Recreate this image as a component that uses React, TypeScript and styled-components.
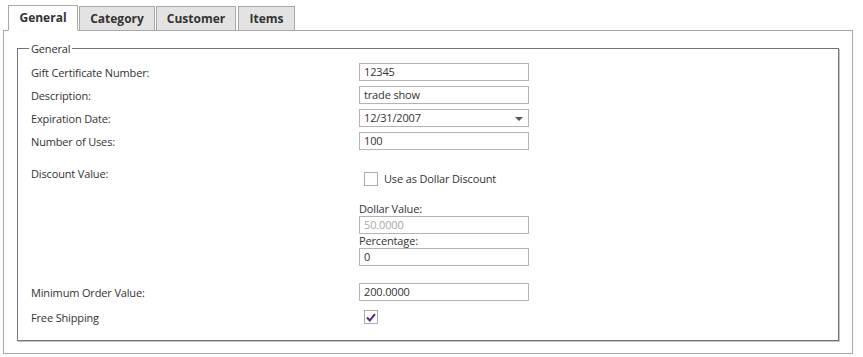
import React from "react";
import styled, { createGlobalStyle } from "styled-components";

const Global = createGlobalStyle`
  html, body { margin: 0; padding: 0; background: #fff; }
  body { padding: 5px 0 0 3px; font-family: "Open Sans", "DejaVu Sans", sans-serif; font-size: 11px; color: #333; letter-spacing: -0.15px; }
  * { box-sizing: border-box; }
`;

const Wrap = styled.div`
  width: 850px;
`;

const TabBar = styled.div`
  display: flex;
  align-items: flex-end;
  padding-left: 5px;
  height: 25px;
  gap: 1px;
`;

const Tab = styled.div<{ $w: number; $active?: boolean; $gap?: number }>`
  width: ${(p) => p.$w}px;
  margin-left: ${(p) => p.$gap ?? 0}px;
  height: ${(p) => (p.$active ? 26 : 24)}px;
  margin-bottom: ${(p) => (p.$active ? -1 : 0)}px;
  position: relative;
  z-index: ${(p) => (p.$active ? 2 : 1)};
  display: flex;
  align-items: center;
  justify-content: center;
  border: 1px solid #a8a8a8;
  border-bottom: ${(p) => (p.$active ? "1px solid #fff" : "none")};
  background: ${(p) => (p.$active ? "#fff" : "#e3e3e3")};
  font-weight: 700;
  font-size: 12px;
  letter-spacing: 0;
  color: #333;
  padding-bottom: ${(p) => (p.$active ? 2 : 0)}px;
`;

const Panel = styled.div`
  border: 1px solid #a8a8a8;
  height: 324px;
  padding: 10px 13px 11px 13px;
`;

const Fieldset = styled.fieldset`
  margin: 0;
  height: 300px;
  border: 1px solid #747474;
  box-shadow: 1px 1px 0 #c4c4c4;
  padding: 7px 13px 0 13px;
`;

const Legend = styled.legend`
  padding: 0 2px;
  margin-left: -2px;
  font-size: 11px;
  line-height: 15px;
  color: #333;
`;

const Row = styled.div<{ $mt?: number; $align?: string }>`
  display: grid;
  grid-template-columns: 328px 170px;
  align-items: ${(p) => p.$align ?? "center"};
  margin-top: ${(p) => p.$mt ?? 0}px;
  min-height: 18px;
`;

const Label = styled.div`
  line-height: 15px;
  color: #333;
`;

const Input = styled.div<{ $disabled?: boolean }>`
  position: relative;
  width: 170px;
  height: 18px;
  border: 1px solid #b4b4b4;
  padding-left: 4px;
  line-height: 16px;
  color: ${(p) => (p.$disabled ? "#a8a8a8" : "#333")};
  background: #fff;
`;

const Arrow = styled.span`
  position: absolute;
  right: 5px;
  top: 7px;
  width: 0;
  height: 0;
  border-left: 4px solid transparent;
  border-right: 4px solid transparent;
  border-top: 4px solid #555;
`;

const Column = styled.div`
  display: flex;
  flex-direction: column;
`;

const CheckLine = styled.div<{ $mt?: number }>`
  display: flex;
  align-items: center;
  gap: 6px;
  margin-top: ${(p) => p.$mt ?? 0}px;
  padding-left: 5px;
  height: 14px;
`;

const Box = styled.div`
  width: 14px;
  height: 14px;
  border: 1px solid #ababab;
  background: #fff;
  display: flex;
  align-items: center;
  justify-content: center;
`;

const CheckText = styled.span`
  font-size: 11px;
  color: #333;
  line-height: 14px;
`;

const SubLabel = styled.div<{ $mt?: number }>`
  line-height: 14px;
  margin-top: ${(p) => p.$mt ?? 0}px;
  color: #333;
`;

const Check = () => (
  <svg width="10" height="9" viewBox="0 0 10 9">
    <path d="M1 4.5 L3.8 7.5 L9 1.2" stroke="#5a2a8a" strokeWidth="2" fill="none" />
  </svg>
);

export default function App() {
  return (
    <>
      <Global />
      <Wrap>
        <TabBar>
          <Tab $w={70} $active>General</Tab>
          <Tab $w={76}>Category</Tab>
          <Tab $w={80}>Customer</Tab>
          <Tab $w={57} $gap={1}>Items</Tab>
        </TabBar>
        <Panel>
          <Fieldset>
            <Legend>General</Legend>
            <Row>
              <Label>Gift Certificate Number:</Label>
              <Input>12345</Input>
            </Row>
            <Row $mt={5}>
              <Label>Description:</Label>
              <Input>trade show</Input>
            </Row>
            <Row $mt={5}>
              <Label>Expiration Date:</Label>
              <Input>
                12/31/2007
                <Arrow />
              </Input>
            </Row>
            <Row $mt={5}>
              <Label>Number of Uses:</Label>
              <Input>100</Input>
            </Row>
            <Row $mt={16} $align="start">
              <Label>Discount Value:</Label>
              <Column>
                <CheckLine $mt={6}>
                  <Box />
                  <CheckText>Use as Dollar Discount</CheckText>
                </CheckLine>
                <SubLabel $mt={16}>Dollar Value:</SubLabel>
                <Input $disabled>50.0000</Input>
                <SubLabel>Percentage:</SubLabel>
                <Input>0</Input>
              </Column>
            </Row>
            <Row $mt={17}>
              <Label>Minimum Order Value:</Label>
              <Input>200.0000</Input>
            </Row>
            <Row $mt={7}>
              <Label>Free Shipping</Label>
              <CheckLine>
                <Box>
                  <Check />
                </Box>
              </CheckLine>
            </Row>
          </Fieldset>
        </Panel>
      </Wrap>
    </>
  );
}
